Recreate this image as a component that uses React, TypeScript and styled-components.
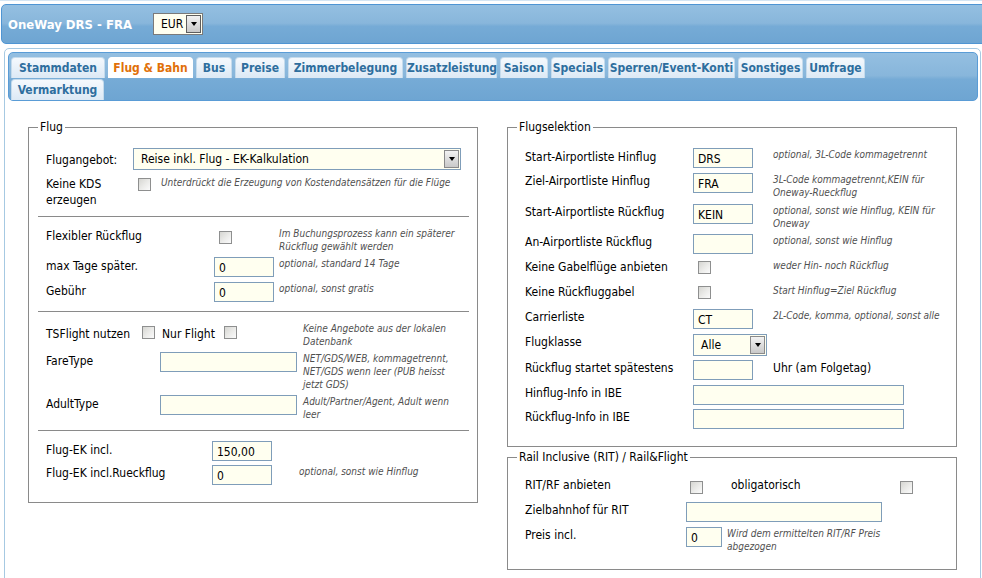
import React from "react"
import styled, { createGlobalStyle, css } from "styled-components"

const GlobalStyle = createGlobalStyle`
  html, body {
    margin: 0;
    padding: 0;
    background: #fff;
  }
  body {
    font-family: "DejaVu Sans Condensed", "DejaVu Sans", Verdana, sans-serif;
    font-size: 12px;
    color: #000;
  }
  * {
    box-sizing: border-box;
  }
`

interface Tab {
  label: string
  w: number
  active?: boolean
}

const tabRows: Tab[][] = [
  [
    { label: "Stammdaten", w: 94 },
    { label: "Flug & Bahn", w: 85, active: true },
    { label: "Bus", w: 36 },
    { label: "Preise", w: 50 },
    { label: "Zimmerbelegung", w: 115 },
    { label: "Zusatzleistung", w: 91 },
    { label: "Saison", w: 48 },
    { label: "Specials", w: 54 },
    { label: "Sperren/Event-Konti", w: 127 },
    { label: "Sonstiges", w: 65 },
    { label: "Umfrage", w: 59 },
  ],
  [{ label: "Vermarktung", w: 93 }],
]

const Hint: React.FC<{ lines: string[] }> = ({ lines }) => (
  <HintText>
    {lines.map((l, i) => (
      <div key={i}>{l}</div>
    ))}
  </HintText>
)

const Select: React.FC<{ value: string; width: number; dark?: boolean }> = ({ value, width, dark }) => (
  <SelectBox $w={width} $dark={dark}>
    <SelectValue>{value}</SelectValue>
    <SelectButton $dark={dark}>
      <Arrow />
    </SelectButton>
  </SelectBox>
)

export default function App() {
  return (
    <Page>
      <GlobalStyle />
      <Header>
        <Title>OneWay DRS - FRA</Title>
        <Select value="EUR" width={50} dark />
      </Header>

      <Panel>
        <TabBar>
          {tabRows.map((row, ri) => (
            <TabRow key={ri}>
              {row.map((t) => (
                <TabItem key={t.label} $w={t.w} $active={t.active}>
                  {t.label}
                </TabItem>
              ))}
            </TabRow>
          ))}
        </TabBar>

        <Columns>
          <Fieldset>
            <Legend>Flug</Legend>
            <Section>
              <Row $cols="87px 328px">
                <Label $pt={4}>Flugangebot:</Label>
                <Select value="Reise inkl. Flug - EK-Kalkulation" width={328} />
              </Row>
              <Row $cols="87px 28px 1fr" $mt={6}>
                <Label>
                  Keine KDS
                  <br />
                  erzeugen
                </Label>
                <Checkbox $ml={5} $mt={2} />
                <Hint lines={["Unterdrückt die Erzeugung von Kostendatensätzen für die Flüge"]} />
              </Row>
            </Section>
            <Divider $mt={8} />
            <Section>
              <Row $cols="168px 65px 1fr">
                <Label $pt={1}>Flexibler Rückflug</Label>
                <Checkbox $ml={5} $mt={4} />
                <Hint lines={["Im Buchungsprozess kann ein späterer", "Rückflug gewählt werden"]} />
              </Row>
              <Row $cols="168px 65px 1fr" $mt={4}>
                <Label $pt={1}>max Tage später.</Label>
                <Input $w={60}>0</Input>
                <Hint lines={["optional, standard 14 Tage"]} />
              </Row>
              <Row $cols="168px 65px 1fr" $mt={5}>
                <Label $pt={1}>Gebühr</Label>
                <Input $w={60}>0</Input>
                <Hint lines={["optional, sonst gratis"]} />
              </Row>
            </Section>
            <Divider $mt={9} />
            <Section>
              <Row $cols="96px 20px 62px 79px 1fr">
                <Label $pt={4}>TSFlight nutzen</Label>
                <Checkbox $mt={4} />
                <Label $pt={4}>Nur Flight</Label>
                <Checkbox $mt={4} />
                <Hint lines={["Keine Angebote aus der lokalen", "Datenbank"]} />
              </Row>
              <Row $cols="114px 143px 1fr" $mt={4}>
                <Label $pt={1}>FareType</Label>
                <Input $w={137} />
                <Hint lines={["NET/GDS/WEB, kommagetrennt,", "NET/GDS wenn leer (PUB heisst", "jetzt GDS)"]} />
              </Row>
              <Row $cols="114px 143px 1fr" $mt={4}>
                <Label $pt={1}>AdultType</Label>
                <Input $w={137} />
                <Hint lines={["Adult/Partner/Agent, Adult wenn", "leer"]} />
              </Row>
            </Section>
            <Divider $mt={9} />
            <Section>
              <Row $cols="166px 87px 1fr">
                <Label $pt={1}>Flug-EK incl.</Label>
                <Input $w={60}>150,00</Input>
              </Row>
              <Row $cols="166px 87px 1fr" $mt={4}>
                <Label>Flug-EK incl.Rueckflug</Label>
                <Input $w={60}>0</Input>
                <Hint lines={["optional, sonst wie Hinflug"]} />
              </Row>
            </Section>
          </Fieldset>

          <RightColumn>
            <Fieldset>
              <Legend>Flugselektion</Legend>
              <Section>
                <Row $cols="168px 80px 1fr">
                  <Label $pt={1}>Start-Airportliste Hinflug</Label>
                  <Input $w={60}>DRS</Input>
                  <Hint lines={["optional, 3L-Code kommagetrennt"]} />
                </Row>
                <Row $cols="168px 80px 1fr" $mt={5}>
                  <Label>Ziel-Airportliste Hinflug</Label>
                  <Input $w={60}>FRA</Input>
                  <Hint lines={["3L-Code kommagetrennt,KEIN für", "Oneway-Rueckflug"]} />
                </Row>
                <Row $cols="168px 80px 1fr" $mt={5}>
                  <Label>Start-Airportliste Rückflug</Label>
                  <Input $w={60}>KEIN</Input>
                  <Hint lines={["optional, sonst wie Hinflug, KEIN für", "Oneway"]} />
                </Row>
                <Row $cols="168px 80px 1fr" $mt={4}>
                  <Label>An-Airportliste Rückflug</Label>
                  <Input $w={60} />
                  <Hint lines={["optional, sonst wie Hinflug"]} />
                </Row>
                <Row $cols="168px 80px 1fr" $mt={5}>
                  <Label>Keine Gabelflüge anbieten</Label>
                  <Checkbox $ml={5} $mt={2} />
                  <Hint lines={["weder Hin- noch Rückflug"]} />
                </Row>
                <Row $cols="168px 80px 1fr" $mt={5}>
                  <Label>Keine Rückfluggabel</Label>
                  <Checkbox $ml={5} $mt={2} />
                  <Hint lines={["Start Hinflug=Ziel Rückflug"]} />
                </Row>
                <Row $cols="168px 80px 1fr" $mt={5}>
                  <Label>Carrierliste</Label>
                  <Input $w={60}>CT</Input>
                  <Hint lines={["2L-Code, komma, optional, sonst alle"]} />
                </Row>
                <Row $cols="168px 80px 1fr" $mt={5}>
                  <Label>Flugklasse</Label>
                  <Select value="Alle" width={74} />
                </Row>
                <Row $cols="168px 80px 1fr" $mt={4}>
                  <Label>Rückflug startet spätestens</Label>
                  <Input $w={60} />
                  <Label>Uhr (am Folgetag)</Label>
                </Row>
                <Row $cols="168px 1fr" $mt={5}>
                  <Label>Hinflug-Info in IBE</Label>
                  <Input $w={211} />
                </Row>
                <Row $cols="168px 1fr" $mt={4}>
                  <Label>Rückflug-Info in IBE</Label>
                  <Input $w={211} />
                </Row>
              </Section>
            </Fieldset>

            <Fieldset $pt={12} $pb={16}>
              <Legend>Rail Inclusive (RIT) / Rail&amp;Flight</Legend>
              <Section>
                <Row $cols="161px 45px 169px 1fr">
                  <Label>RIT/RF anbieten</Label>
                  <Checkbox $ml={4} $mt={4} />
                  <Label>obligatorisch</Label>
                  <Checkbox $mt={4} />
                </Row>
                <Row $cols="161px 1fr" $mt={5}>
                  <Label>Zielbahnhof für RIT</Label>
                  <Input $w={196} />
                </Row>
                <Row $cols="161px 41px 1fr" $mt={5}>
                  <Label>Preis incl.</Label>
                  <Input $w={36}>0</Input>
                  <Hint lines={["Wird dem ermittelten RIT/RF Preis", "abgezogen"]} />
                </Row>
              </Section>
            </Fieldset>
          </RightColumn>
        </Columns>
      </Panel>
    </Page>
  )
}

const blueGloss = css`
  background: linear-gradient(
    to bottom,
    #94bfe1 0%,
    #88b6db 48%,
    #76abd6 56%,
    #6ea5d2 100%
  );
`

const Page = styled.div`
  width: 982px;
  height: 578px;
  overflow: hidden;
  padding-top: 3px;
  border-top: 1px solid #d4e5f3;
`

const Header = styled.div`
  ${blueGloss}
  margin-left: 1px;
  width: 990px;
  height: 40px;
  border: 1px solid #4f95d3;
  border-radius: 5px 0 0 5px;
  display: flex;
  align-items: center;
  padding-left: 6px;
`

const Title = styled.div`
  color: #fff;
  font-weight: bold;
  font-size: 13px;
  width: 145px;
`

const SelectBox = styled.div<{ $w: number; $dark?: boolean }>`
  width: ${(p) => p.$w}px;
  height: 22px;
  background: #fffff0;
  border: 1px solid ${(p) => (p.$dark ? "#7a7a7a" : "#7f9db9")};
  display: flex;
  align-items: stretch;
  padding: 1px;
`

const SelectValue = styled.div`
  flex: 1;
  padding-left: 6px;
  line-height: 19px;
  font-size: 12px;
  white-space: nowrap;
  overflow: hidden;
`

const SelectButton = styled.div<{ $dark?: boolean }>`
  width: 15px;
  background: linear-gradient(to bottom, #f2f2f2, #c9c9c9);
  border: 1px solid ${(p) => (p.$dark ? "#5e5e5e" : "#8a8a8a")};
  display: flex;
  align-items: center;
  justify-content: center;
`

const Arrow = styled.span`
  width: 0;
  height: 0;
  border-left: 3.5px solid transparent;
  border-right: 3.5px solid transparent;
  border-top: 4px solid #000;
`

const Panel = styled.div`
  margin: 4px 0 0 4px;
  width: 977px;
  height: 560px;
  border: 1px solid #a6c9e2;
  border-radius: 5px;
  padding: 3px 2px 0 3px;
`

const TabBar = styled.div`
  ${blueGloss}
  height: 49px;
  border: 1px solid #5a9cd6;
  border-radius: 5px;
  padding: 4px 0 0 2px;
  display: flex;
  flex-direction: column;
  gap: 1px;
`

const TabRow = styled.div`
  display: flex;
  gap: 3px;
`

const TabItem = styled.div<{ $w: number; $active?: boolean }>`
  width: ${(p) => p.$w}px;
  height: 21px;
  line-height: 21px;
  text-align: center;
  font-weight: bold;
  font-size: 12px;
  border: 1px solid ${(p) => (p.$active ? "#fff" : "#c5dbec")};
  border-bottom: none;
  border-radius: 4px 4px 0 0;
  color: ${(p) => (p.$active ? "#e17009" : "#2e6e9e")};
  background: ${(p) => (p.$active ? "#fff" : "linear-gradient(to bottom, #f5f9fd, #dce9f5)")};
  white-space: nowrap;
`

const Columns = styled.div`
  display: grid;
  grid-template-columns: 450px 450px;
  column-gap: 29px;
  align-items: start;
  margin-top: 19px;
  padding-left: 20px;
`

const RightColumn = styled.div`
  display: flex;
  flex-direction: column;
  gap: 3px;
`

const Fieldset = styled.fieldset<{ $pt?: number; $pb?: number }>`
  margin: 0;
  min-width: 0;
  border: 1px solid #8a8a8a;
  padding: ${(p) => p.$pt ?? 13}px 8px ${(p) => p.$pb ?? 17}px 9px;
`

const Legend = styled.legend`
  padding: 0 2px;
  font-size: 12px;
  line-height: 15px;
  color: #000;
`

const Section = styled.div`
  padding-left: 8px;
`

const Divider = styled.div<{ $mt: number }>`
  height: 1px;
  background: #8a8a8a;
  margin: ${(p) => p.$mt}px 0 10px;
`

const Row = styled.div<{ $cols: string; $mt?: number }>`
  display: grid;
  grid-template-columns: ${(p) => p.$cols};
  align-items: start;
  min-height: 20px;
  margin-top: ${(p) => p.$mt ?? 0}px;
`

const Label = styled.div<{ $pt?: number }>`
  font-size: 12px;
  line-height: 16px;
  padding-top: ${(p) => p.$pt ?? 0}px;
  white-space: nowrap;
`

const Input = styled.div<{ $w: number }>`
  width: ${(p) => p.$w}px;
  height: 20px;
  background: #fffff0;
  border: 1px solid #7f9db9;
  padding: 2px 0 0 4px;
  font-size: 12px;
  line-height: 16px;
  white-space: nowrap;
`

const Checkbox = styled.span<{ $ml?: number; $mt?: number }>`
  display: block;
  width: 13px;
  height: 13px;
  margin-left: ${(p) => p.$ml ?? 0}px;
  margin-top: ${(p) => p.$mt ?? 0}px;
  border: 1px solid #8e8f8f;
  background: linear-gradient(135deg, #d6d6d2 0%, #ececea 55%, #fbfbfb 100%);
`

const HintText = styled.div`
  font-size: 10px;
  line-height: 13px;
  font-style: italic;
  color: #505050;
  white-space: nowrap;
`
